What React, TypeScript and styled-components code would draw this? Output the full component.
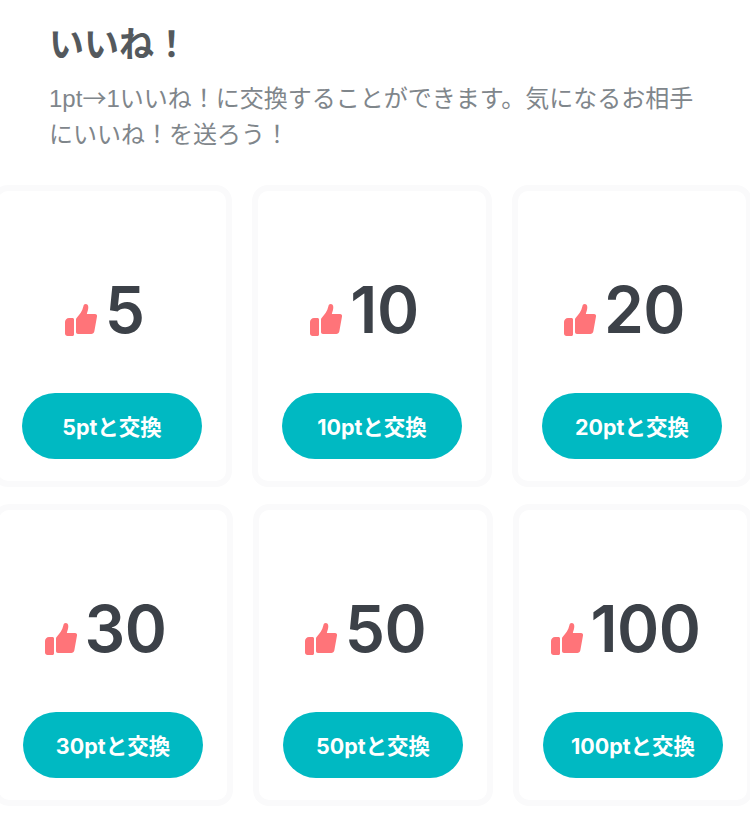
import React from "react";
import styled, { createGlobalStyle } from "styled-components";

const Global = createGlobalStyle`
  html, body { margin: 0; padding: 0; background: #fff; }
  body { width: 750px; height: 824px; overflow: hidden; font-family: "Liberation Sans", "Noto Sans CJK JP", sans-serif; }
`;

const Page = styled.main`
  width: 750px;
  height: 824px;
  overflow: hidden;
  padding-top: 23px;
  box-sizing: border-box;
`;

const Header = styled.header`
  padding: 0 49px;
`;

const Title = styled.h1`
  margin: 0;
  font-size: 35px;
  line-height: 44px;
  font-weight: 700;
  color: #54595d;
`;

const Description = styled.p`
  margin: 12px 0 0;
  font-size: 24px;
  line-height: 36px;
  color: #7f868b;
  width: 650px;
`;

const DescriptionLine = styled.span`
  display: block;
`;

const Arrow = styled.span`
  font-family: "Noto Sans CJK JP", sans-serif;
`;

const Rows = styled.div`
  display: flex;
  flex-direction: column;
  gap: 17px;
  margin-top: 32px;
`;

const Row = styled.div<{ $shift: number }>`
  display: flex;
  gap: 20px;
  margin-left: ${(p) => p.$shift}px;
  width: 780px;
`;

const Card = styled.section`
  flex: none;
  box-sizing: border-box;
  width: 240px;
  height: 302px;
  border: 6px solid #fafafb;
  border-radius: 16px;
  background: #fff;
  display: flex;
  flex-direction: column;
  align-items: center;
`;

const Amount = styled.div`
  display: flex;
  align-items: flex-end;
  justify-content: center;
  gap: 7px;
  margin-top: 87px;
  height: 64px;
  padding-right: 16px;
`;

const ThumbIcon = styled.svg`
  width: 34px;
  height: 34px;
  margin-bottom: 6px;
  flex: none;
`;

const Count = styled.span`
  font-family: "Inter", "Liberation Sans", sans-serif;
  font-size: 64px;
  line-height: 64px;
  font-weight: 600;
  color: #3c4148;
  letter-spacing: -0.5px;
`;

const ExchangeButton = styled.button`
  margin-top: 51px;
  width: 180px;
  height: 66px;
  border: 0;
  border-radius: 33px;
  background: #00b9c2;
  color: #fff;
  font-family: "Inter", "Liberation Sans", "Noto Sans CJK JP", sans-serif;
  font-size: 21.5px;
  font-weight: 700;
  padding: 0 0 2px;
`;

const Thumb = () => (
  <ThumbIcon viewBox="0 0 34 34" aria-hidden="true">
    <path
      fill="#ff7479"
      d="M1 20c0-2.200 1.800-4 4-4h3.500c.8 0 1.500.7 1.500 1.500v15c0 .8-.7 1.500-1.500 1.500H3.500C2.100 34 1 32.900 1 31.500z"
    />
    <path
      fill="#ff7479"
      d="M12 17.500c0-.7.3-1.300.8-1.800 2.700-2.900 5.600-6.600 6.600-11.400.3-1.400 1-2.300 2.300-2.300 1.500 0 2.600 1.200 2.600 3.100 0 2.300-.6 4.400-1.400 6.300-.2.400.1.600.5.600h7.600c1.500 0 2.300 1.100 2 2.500l-2.700 15c-.3 1.600-1.500 2.500-3 2.500H14c-1.200 0-2-.8-2-2z"
    />
  </ThumbIcon>
);

const rows = [
  { shift: -8, items: [5, 10, 20] },
  { shift: -7, items: [30, 50, 100] },
];

export default function App() {
  return (
    <Page>
      <Global />
      <Header>
        <Title>いいね！</Title>
        <Description>
          <DescriptionLine>
            1pt<Arrow>→</Arrow>1いいね！に交換することができます。気になるお相手
          </DescriptionLine>
          <DescriptionLine>にいいね！を送ろう！</DescriptionLine>
        </Description>
      </Header>
      <Rows>
        {rows.map((row) => (
          <Row key={row.shift} $shift={row.shift}>
            {row.items.map((n) => (
              <Card key={n}>
                <Amount>
                  <Thumb />
                  <Count>{n}</Count>
                </Amount>
                <ExchangeButton>{n}ptと交換</ExchangeButton>
              </Card>
            ))}
          </Row>
        ))}
      </Rows>
    </Page>
  );
}
